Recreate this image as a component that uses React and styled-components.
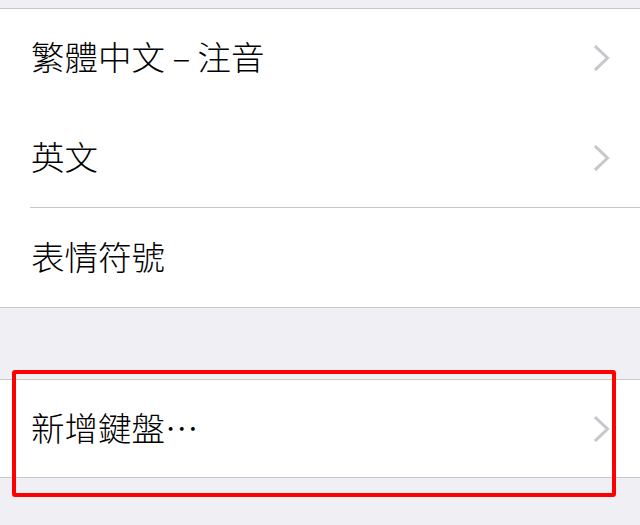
import React from "react";
import styled, { createGlobalStyle } from "styled-components";

const GlobalStyle = createGlobalStyle`
  html, body {
    margin: 0;
    padding: 0;
    background: #efeff4;
  }
  body {
    font-family: "Noto Sans CJK TC", "Noto Sans", sans-serif;
  }
`;

const Page = styled.div`
  width: 640px;
  height: 525px;
  overflow: hidden;
  background: #efeff4;
  padding-top: 8px;
  box-sizing: border-box;
`;

const Section = styled.div`
  position: relative;
  background: #fff;
  border-top: 1px solid #c8c7cc;
  border-bottom: 1px solid #c8c7cc;
  margin-top: ${(p) => p.$gap || 0}px;
`;

const Row = styled.div`
  height: ${(p) => p.$height || 99}px;
  display: flex;
  align-items: center;
  padding-left: 31px;
  padding-right: 30px;
  position: relative;

  & + &::before {
    content: "";
    position: absolute;
    top: -1px;
    left: 30px;
    right: 0;
    height: 1px;
    background: #c8c7cc;
  }
  & + & {
    margin-top: 1px;
  }
`;

const Label = styled.span`
  flex: 1;
  font-size: 33.5px;
  font-weight: 300;
  color: #000;
  line-height: 1;
  padding-bottom: 4px;
  white-space: nowrap;
`;

const Highlight = styled.div`
  position: absolute;
  top: -10px;
  left: 12px;
  width: 604px;
  height: 127px;
  box-sizing: border-box;
  border: 4px solid #ff0000;
  border-radius: 3px;
  pointer-events: none;
`;

const Chevron = () => (
  <svg width="16" height="26" viewBox="0 0 16 26">
    <polyline
      points="2,2 13.5,13 2,24"
      fill="none"
      stroke="#c7c7cc"
      strokeWidth="3"
      strokeLinecap="square"
    />
  </svg>
);

const keyboards = [
  { label: "繁體中文 – 注音", arrow: true, height: 98 },
  { label: "英文", arrow: true },
  { label: "表情符號", arrow: false },
];

export default function App() {
  return (
    <Page lang="zh-Hant">
      <GlobalStyle />
      <Section>
        {keyboards.map((k) => (
          <Row key={k.label} $height={k.height}>
            <Label>{k.label}</Label>
            {k.arrow && <Chevron />}
          </Row>
        ))}
      </Section>
      <Section $gap={71}>
        <Row $height={97}>
          <Label>新增鍵盤…</Label>
          <Chevron />
        </Row>
        <Highlight />
      </Section>
    </Page>
  );
}
